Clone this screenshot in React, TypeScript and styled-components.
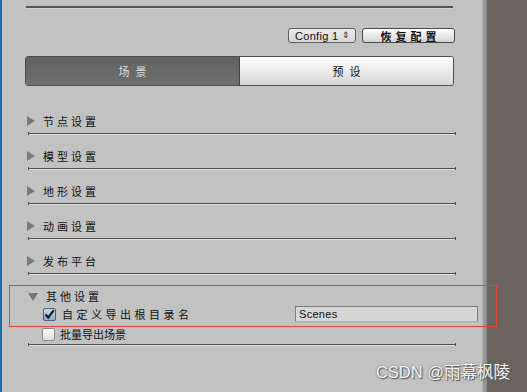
import * as React from 'react';
import styled, { createGlobalStyle } from 'styled-components';

const GlobalStyle = createGlobalStyle`
  html, body {
    margin: 0;
    padding: 0;
    background: #c2c2c2;
  }
  body {
    font-family: "Liberation Sans", "Noto Sans CJK SC", sans-serif;
    font-size: 11px;
    color: #111;
  }
`;

const Screen = styled.div`
  position: relative;
  display: flex;
  width: 527px;
  height: 392px;
  overflow: hidden;
`;

const BlueEdge = styled.div`
  width: 2px;
  background: #1d6fae;
`;

const Panel = styled.div`
  flex: 1;
  display: flex;
  flex-direction: column;
  padding: 6px 26px 0 23px;
  background: #c2c2c2;
`;

const Splitter = styled.div`
  width: 5px;
  background: linear-gradient(to right, #b2b2b2 0, #b2b2b2 1px, #9c9c9c 1px, #8f8f8f 100%);
`;

const SideArea = styled.div`
  width: 40px;
  background: #6b645e;
`;

const TopRule = styled.div`
  margin: 0 3px 0 1px;
  border-top: 2px solid #565656;
  border-bottom: 1px solid #d0d0d0;
  box-sizing: border-box;
  height: 3px;
`;

const Toolbar = styled.div`
  display: flex;
  justify-content: flex-end;
  gap: 6px;
  margin-top: 19px;
  padding-right: 1px;
`;

const Select = styled.div`
  display: flex;
  align-items: center;
  justify-content: space-between;
  width: 68px;
  height: 15px;
  box-sizing: border-box;
  padding: 0 5px 0 6px;
  border: 1px solid #5c5c5c;
  border-radius: 3px;
  background: linear-gradient(#ececec, #d6d6d6);
  font-size: 11px;
  letter-spacing: 0.3px;
  color: #111;
`;

const Arrows = styled.span`
  font-size: 9px;
  line-height: 1;
  color: #333;
`;

const Button = styled.div`
  width: 93px;
  height: 15px;
  box-sizing: border-box;
  display: flex;
  align-items: center;
  justify-content: center;
  border: 1px solid #4a4a4a;
  border-radius: 3px;
  background: linear-gradient(#ffffff, #d4d4d4);
  font-family: "Noto Sans CJK SC", sans-serif;
  font-size: 11px;
  font-weight: bold;
  letter-spacing: 4px;
  padding-left: 4px;
`;

const Tabs = styled.div`
  display: flex;
  height: 30px;
  margin-top: 13px;
  margin-right: 2px;
  box-sizing: border-box;
  border: 1px solid #4e4e4e;
  border-radius: 3px;
  overflow: hidden;
`;

const Tab = styled.div<{ $active?: boolean }>`
  flex: 1;
  display: flex;
  align-items: center;
  justify-content: center;
  font-family: "Noto Sans CJK SC", sans-serif;
  font-size: 11px;
  letter-spacing: 6px;
  padding-left: 6px;
  color: ${(p) => (p.$active ? '#dcdcdc' : '#111')};
  background: ${(p) =>
    p.$active ? 'linear-gradient(#626262, #707070)' : 'linear-gradient(#ffffff, #d6d6d6)'};
  border-right: ${(p) => (p.$active ? '1px solid #444' : 'none')};
`;

const Sections = styled.div`
  display: flex;
  flex-direction: column;
  margin-top: 28px;
`;

const Section = styled.div`
  display: flex;
  flex-direction: column;
`;

const Header = styled.div`
  display: flex;
  align-items: center;
  height: 14px;
  gap: 8px;
  font-family: "Noto Sans CJK SC", sans-serif;
  font-size: 11px;
  letter-spacing: 3px;
  color: #111;
`;

const Arrow = styled.span<{ $open?: boolean }>`
  width: 0;
  height: 0;
  margin-left: 2px;
  ${(p) =>
    p.$open
      ? `border-left: 5px solid transparent;
         border-right: 5px solid transparent;
         border-top: 8px solid #7a7a7a;
         margin-top: 1px;`
      : `border-top: 5px solid transparent;
         border-bottom: 5px solid transparent;
         border-left: 8px solid #7a7a7a;`}
`;

const Rule = styled.div<{ $tight?: boolean }>`
  position: relative;
  height: 3px;
  margin: ${(p) => (p.$tight ? '2px' : '4px')} 0 14px 3px;
  &::before {
    content: '';
    display: block;
    height: 1px;
    margin-top: 1px;
    background: #4f4f4f;
    box-shadow: 0 1px 0 #e0e0e0;
  }
  &::after {
    content: '';
    position: absolute;
    left: 0;
    top: 0;
    right: 0;
    height: 3px;
    border-left: 1px solid #4f4f4f;
    border-right: 1px solid #4f4f4f;
  }
`;

/* red annotation frame drawn over the panel edge */
const Highlight = styled.div`
  position: relative;
  z-index: 1;
  display: flex;
  flex-direction: column;
  gap: 3px;
  margin: -4px -41px 0 -16px;
  padding: 3px 0 4px 16px;
  border: 1px solid #e0443c;
`;

const OptionRow = styled.div`
  display: flex;
  align-items: center;
  height: 16px;
  padding-left: 17px;
`;

const Box = styled.span<{ $checked?: boolean }>`
  width: 13px;
  height: 13px;
  box-sizing: border-box;
  border: 1px solid ${(p) => (p.$checked ? '#50627a' : '#8a8a8a')};
  border-radius: 2px;
  background: ${(p) =>
    p.$checked ? 'linear-gradient(#c6d6ea, #8fa9c8)' : 'linear-gradient(#ffffff, #dcdcdc)'};
  display: flex;
  align-items: center;
  justify-content: center;
  flex-shrink: 0;
`;

const OptionLabel = styled.span<{ $spaced?: boolean }>`
  margin-left: ${(p) => (p.$spaced ? '6px' : '5px')};
  font-family: "Noto Sans CJK SC", sans-serif;
  font-size: 11px;
  letter-spacing: ${(p) => (p.$spaced ? '3.5px' : '0')};
  color: #111;
`;

const TextField = styled.div`
  margin-left: auto;
  margin-right: 18px;
  width: 183px;
  height: 16px;
  box-sizing: border-box;
  border: 1px solid #7c7c7c;
  border-bottom-color: #a8a8a8;
  background: #d6d6d6;
  padding-left: 3px;
  display: flex;
  align-items: center;
  font-size: 11px;
  letter-spacing: 0.3px;
  color: #111;
`;

const PlainRow = styled(OptionRow)`
  height: 14px;
`;

const Watermark = styled.div`
  position: absolute;
  right: 17px;
  bottom: 9px;
  font-family: "Liberation Sans", "Noto Sans CJK SC", sans-serif;
  font-size: 16.5px;
  color: #f4f4f4;
  text-shadow: 1px 1px 1px #555, 0 0 2px #666;
`;

const Check = () => (
  <svg width="11" height="11" viewBox="0 0 11 11">
    <path d="M1.5 5.5 L4.2 8.6 L9.8 1.2" fill="none" stroke="#111" strokeWidth="2" />
  </svg>
);

const closed = ['节点设置', '模型设置', '地形设置', '动画设置', '发布平台'];

const App = () => (
  <>
    <GlobalStyle />
    <Screen>
      <BlueEdge />
      <Panel>
        <TopRule />
        <Toolbar>
          <Select>
            <span>Config 1</span>
            <Arrows>⇕</Arrows>
          </Select>
          <Button>恢复配置</Button>
        </Toolbar>
        <Tabs>
          <Tab $active>场景</Tab>
          <Tab>预设</Tab>
        </Tabs>
        <Sections>
          {closed.map((title) => (
            <Section key={title}>
              <Header>
                <Arrow />
                <span>{title}</span>
              </Header>
              <Rule />
            </Section>
          ))}
          <Section>
            <Highlight>
              <Header>
                <Arrow $open />
                <span>其他设置</span>
              </Header>
              <OptionRow>
                <Box $checked>
                  <Check />
                </Box>
                <OptionLabel $spaced>自定义导出根目录名</OptionLabel>
                <TextField>Scenes</TextField>
              </OptionRow>
            </Highlight>
            <PlainRow>
              <Box />
              <OptionLabel>批量导出场景</OptionLabel>
            </PlainRow>
            <Rule $tight />
          </Section>
        </Sections>
      </Panel>
      <Splitter />
      <SideArea />
      <Watermark>CSDN @雨幕枫陵</Watermark>
    </Screen>
  </>
);

export default App;
